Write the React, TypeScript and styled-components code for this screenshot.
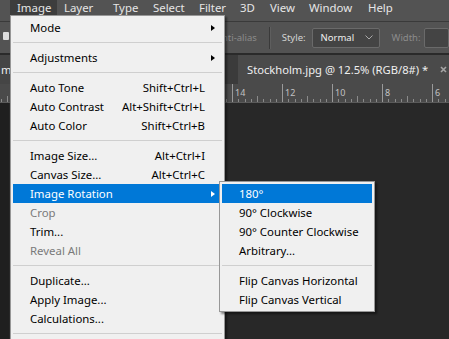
import React from "react";
import styled, { createGlobalStyle } from "styled-components";

const GlobalStyle = createGlobalStyle`
  html, body { margin: 0; padding: 0; background: #282828; overflow: hidden; }
  body { font-family: "Noto Sans", "Segoe UI", sans-serif; }
`;

const Screen = styled.div`
  position: relative;
  width: 449px;
  height: 339px;
  overflow: hidden;
  display: flex;
  flex-direction: column;
  background: #282828;
  font-family: "Noto Sans", sans-serif;
`;

/* ---------- Photoshop chrome ---------- */
const MenuBar = styled.div`
  display: flex;
  flex-shrink: 0;
  height: 21px;
  padding-left: 10px;
  background: #535353;
  border-bottom: 1px solid #3a3a3a;
`;

const BarItem = styled.div<{ $w: number; $open?: boolean }>`
  width: ${(p) => p.$w}px;
  flex-shrink: 0;
  box-sizing: border-box;
  padding-left: 7px;
  height: 21px;
  line-height: 15px;
  font-size: 11.4px;
  color: #e6e6e6;
  white-space: nowrap;
  background: ${(p) => (p.$open ? "#3d3d3d" : "transparent")};
`;

const OptionsBar = styled.div`
  display: flex;
  align-items: center;
  flex-shrink: 0;
  height: 31px;
  background: #535353;
  font-size: 9.5px;
`;

const ToolIcon = styled.div`
  width: 7px;
  height: 8px;
  margin-left: 3px;
  margin-top: -3px;
  border-radius: 1px;
  background: #dcdcdc;
`;

const OptLabel = styled.span<{ $dim?: boolean; $ml: number }>`
  margin-left: ${(p) => p.$ml}px;
  color: ${(p) => (p.$dim ? "#8b8b8b" : "#d4d4d4")};
  white-space: nowrap;
`;

const VSep = styled.div`
  width: 1px;
  height: 22px;
  margin-left: 12px;
  background: #3a3a3a;
  box-shadow: 1px 0 0 #5e5e5e;
`;

const SelectBox = styled.div`
  display: flex;
  align-items: center;
  justify-content: space-between;
  box-sizing: border-box;
  width: 78px;
  height: 20px;
  margin-left: 6px;
  padding: 0 6px 0 8px;
  background: #444444;
  border: 1px solid #6a6a6a;
  border-radius: 2px;
  color: #efefef;
`;

const InputBox = styled.div`
  width: 30px;
  height: 20px;
  margin-left: 3px;
  box-sizing: border-box;
  background: #444444;
  border: 1px solid #6a6a6a;
  border-radius: 2px;
`;

const Gutter = styled.div`
  flex-shrink: 0;
  height: 2px;
  background: #2a2a2a;
`;

const TabBar = styled.div`
  display: flex;
  flex-shrink: 0;
  height: 29px;
  background: #3b3b3b;
`;

const DocTab = styled.div<{ $active?: boolean; $w?: number }>`
  display: flex;
  align-items: center;
  flex-shrink: 0;
  box-sizing: border-box;
  ${(p) => (p.$w ? `width: ${p.$w}px;` : "flex: 1;")}
  padding-left: ${(p) => (p.$active ? 9 : 1)}px;
  background: ${(p) => (p.$active ? "#4a4a4a" : "#454545")};
  margin-right: ${(p) => (p.$active ? 0 : 13)}px;
  color: #efefef;
  font-size: 11.2px;
  white-space: nowrap;
`;

const CloseX = styled.svg`
  margin-left: 12px;
  flex-shrink: 0;
`;

const RulerWrap = styled.div`
  flex-shrink: 0;
  height: 18px;
  background: #4a4a4a;
  border-bottom: 1px solid #5a5a5a;
`;

const Workspace = styled.div`
  flex: 1;
  display: flex;
`;

const LeftStrip = styled.div`
  width: 9px;
  background: #1f1f1f;
`;

const Canvas = styled.div`
  flex: 1;
  background: #282828;
`;

/* ---------- Windows menus ---------- */
const DropMenu = styled.div<{ $left: number; $top: number; $w: number }>`
  position: absolute;
  left: ${(p) => p.$left}px;
  top: ${(p) => p.$top}px;
  width: ${(p) => p.$w}px;
  box-sizing: border-box;
  padding: 2px;
  background: #f0f0f0;
  border: 1px solid #979797;
  box-shadow: 2px 2px 2px rgba(0, 0, 0, 0.45);
  font-family: "Noto Sans", sans-serif;
  font-size: 11.4px;
`;

const Item = styled.div<{ $active?: boolean; $disabled?: boolean }>`
  display: flex;
  align-items: center;
  height: 19px;
  padding: 0 7px 0 17px;
  white-space: nowrap;
  background: ${(p) => (p.$active ? "#0078d7" : "transparent")};
  color: ${(p) => (p.$active ? "#ffffff" : p.$disabled ? "#7a7a7a" : "#000000")};
`;

const ItemLabel = styled.span`
  flex: 1;
`;

const Shortcut = styled.span``;

const ArrowCell = styled.span`
  display: flex;
  justify-content: flex-end;
  width: 10px;
`;

const Arrow = styled.span<{ $light?: boolean }>`
  width: 0;
  height: 0;
  border-top: 3.5px solid transparent;
  border-bottom: 3.5px solid transparent;
  border-left: 4px solid ${(p) => (p.$light ? "#ffffff" : "#000000")};
`;

const Sep = styled.div`
  height: 1px;
  margin: 5px 0;
  background: #cfcfcf;
`;

type Entry =
  | { sep: true }
  | { label: string; sc?: string; arrow?: boolean; active?: boolean; disabled?: boolean };

const mainItems: Entry[] = [
  { label: "Mode", arrow: true },
  { sep: true },
  { label: "Adjustments", arrow: true },
  { sep: true },
  { label: "Auto Tone", sc: "Shift+Ctrl+L" },
  { label: "Auto Contrast", sc: "Alt+Shift+Ctrl+L" },
  { label: "Auto Color", sc: "Shift+Ctrl+B" },
  { sep: true },
  { label: "Image Size...", sc: "Alt+Ctrl+I" },
  { label: "Canvas Size...", sc: "Alt+Ctrl+C" },
  { label: "Image Rotation", arrow: true, active: true },
  { label: "Crop", disabled: true },
  { label: "Trim..." },
  { label: "Reveal All", disabled: true },
  { sep: true },
  { label: "Duplicate..." },
  { label: "Apply Image..." },
  { label: "Calculations..." },
  { sep: true },
];

const subItems: Entry[] = [
  { label: "180°", active: true },
  { label: "90° Clockwise" },
  { label: "90° Counter Clockwise" },
  { label: "Arbitrary..." },
  { sep: true },
  { label: "Flip Canvas Horizontal" },
  { label: "Flip Canvas Vertical" },
];

function MenuList({ items, withArrows }: { items: Entry[]; withArrows: boolean }) {
  return (
    <>
      {items.map((e, i) =>
        "sep" in e ? (
          <Sep key={i} />
        ) : (
          <Item key={i} $active={e.active} $disabled={e.disabled}>
            <ItemLabel>{e.label}</ItemLabel>
            {e.sc && <Shortcut>{e.sc}</Shortcut>}
            {withArrows && <ArrowCell>{e.arrow && <Arrow $light={e.active} />}</ArrowCell>}
          </Item>
        )
      )}
    </>
  );
}

function Ruler() {
  const ticks: React.ReactNode[] = [];
  for (let k = -5; k <= 4; k++) {
    const x0 = 232 + 50 * k;
    ticks.push(<line key={`M${k}`} x1={x0 + 0.5} y1={0} x2={x0 + 0.5} y2={18} stroke="#9a9a9a" />);
    for (let i = 1; i < 8; i++) {
      const x = Math.round(x0 + 6.25 * i) + 0.5;
      ticks.push(<line key={`m${k}-${i}`} x1={x} y1={i === 4 ? 12 : 15} x2={x} y2={18} stroke="#8a8a8a" />);
    }
    if (k >= 0) {
      ticks.push(
        <text key={`t${k}`} x={x0 + 3} y={12} fontSize="9" fill="#c2c2c2" fontFamily="Noto Sans, sans-serif">
          {14 - 2 * k}
        </text>
      );
    }
  }
  return (
    <RulerWrap>
      <svg width="449" height="18" viewBox="0 0 449 18">
        {ticks}
      </svg>
    </RulerWrap>
  );
}

const bar = [
  { t: "Image", w: 47, open: true },
  { t: "Layer", w: 49 },
  { t: "Type", w: 40 },
  { t: "Select", w: 46 },
  { t: "Filter", w: 41 },
  { t: "3D", w: 30 },
  { t: "View", w: 39 },
  { t: "Window", w: 59 },
  { t: "Help", w: 40 },
];

export default function App() {
  return (
    <>
      <GlobalStyle />
      <Screen>
        <MenuBar>
          {bar.map((b) => (
            <BarItem key={b.t} $w={b.w} $open={b.open}>
              {b.t}
            </BarItem>
          ))}
        </MenuBar>
        <OptionsBar>
          <ToolIcon />
          <OptLabel $dim $ml={207}>Anti-alias</OptLabel>
          <VSep />
          <OptLabel $ml={12}>Style:</OptLabel>
          <SelectBox>
            <span>Normal</span>
            <svg width="8" height="5" viewBox="0 0 8 5">
              <polyline points="0.5,0.5 4,4 7.5,0.5" fill="none" stroke="#a8a8a8" strokeWidth="1" />
            </svg>
          </SelectBox>
          <OptLabel $dim $ml={12}>Width:</OptLabel>
          <InputBox />
        </OptionsBar>
        <Gutter />
        <TabBar>
          <DocTab $w={225}>m</DocTab>
          <DocTab $active>
            Stockholm.jpg @ 12.5% (RGB/8#) *
            <CloseX width="7" height="7" viewBox="0 0 7 7">
              <path d="M1 1 L6 6 M6 1 L1 6" stroke="#a5a5a5" strokeWidth="1.6" />
            </CloseX>
          </DocTab>
        </TabBar>
        <Ruler />
        <Workspace>
          <LeftStrip />
          <Canvas />
        </Workspace>

        <DropMenu $left={10} $top={15} $w={215}>
          <MenuList items={mainItems} withArrows />
          <DropMenu $left={208} $top={165} $w={156}>
            <MenuList items={subItems} withArrows={false} />
          </DropMenu>
        </DropMenu>
      </Screen>
    </>
  );
}
